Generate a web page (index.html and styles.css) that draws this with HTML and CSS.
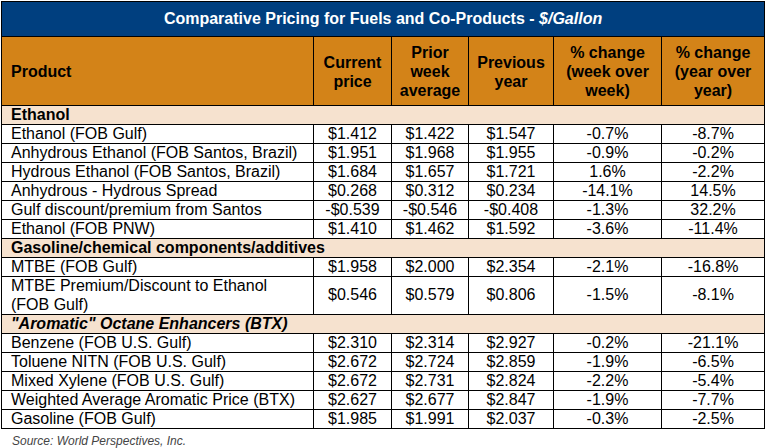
FILE: index.html
```html
<!DOCTYPE html>
<html>
<head>
<meta charset="utf-8">
<link rel="stylesheet" href="styles.css">
</head>
<body>
<div class="wrap">
<table class="pricing">
  <colgroup>
    <col class="c-prod"><col class="c-cur"><col class="c-prior"><col class="c-prev"><col class="c-wk"><col class="c-yr">
  </colgroup>
  <thead>
    <tr><th class="title" colspan="6">Comparative Pricing for Fuels and Co-Products - <i>$/Gallon</i></th></tr>
    <tr class="head">
      <th class="left">Product</th>
      <th>Current<br>price</th>
      <th>Prior<br>week<br>average</th>
      <th>Previous<br>year</th>
      <th>% change<br>(week over<br>week)</th>
      <th>% change<br>(year over<br>year)</th>
    </tr>
  </thead>
  <tbody>
    <tr class="section"><td colspan="6">Ethanol</td></tr>
    <tr><td>Ethanol (FOB Gulf)</td><td>$1.412</td><td>$1.422</td><td>$1.547</td><td>-0.7%</td><td>-8.7%</td></tr>
    <tr><td>Anhydrous Ethanol (FOB Santos, Brazil)</td><td>$1.951</td><td>$1.968</td><td>$1.955</td><td>-0.9%</td><td>-0.2%</td></tr>
    <tr><td>Hydrous Ethanol (FOB Santos, Brazil)</td><td>$1.684</td><td>$1.657</td><td>$1.721</td><td>1.6%</td><td>-2.2%</td></tr>
    <tr><td>Anhydrous - Hydrous Spread</td><td>$0.268</td><td>$0.312</td><td>$0.234</td><td>-14.1%</td><td>14.5%</td></tr>
    <tr><td>Gulf discount/premium from Santos</td><td>-$0.539</td><td>-$0.546</td><td>-$0.408</td><td>-1.3%</td><td>32.2%</td></tr>
    <tr><td>Ethanol (FOB PNW)</td><td>$1.410</td><td>$1.462</td><td>$1.592</td><td>-3.6%</td><td>-11.4%</td></tr>
    <tr class="section"><td colspan="6">Gasoline/chemical components/additives</td></tr>
    <tr><td>MTBE (FOB Gulf)</td><td>$1.958</td><td>$2.000</td><td>$2.354</td><td>-2.1%</td><td>-16.8%</td></tr>
    <tr class="double"><td>MTBE Premium/Discount to Ethanol<br>(FOB Gulf)</td><td>$0.546</td><td>$0.579</td><td>$0.806</td><td>-1.5%</td><td>-8.1%</td></tr>
    <tr class="section"><td colspan="6"><i>"Aromatic" Octane Enhancers (BTX)</i></td></tr>
    <tr><td>Benzene (FOB U.S. Gulf)</td><td>$2.310</td><td>$2.314</td><td>$2.927</td><td>-0.2%</td><td>-21.1%</td></tr>
    <tr><td>Toluene NITN (FOB U.S. Gulf)</td><td>$2.672</td><td>$2.724</td><td>$2.859</td><td>-1.9%</td><td>-6.5%</td></tr>
    <tr><td>Mixed Xylene (FOB U.S. Gulf)</td><td>$2.672</td><td>$2.731</td><td>$2.824</td><td>-2.2%</td><td>-5.4%</td></tr>
    <tr><td>Weighted Average Aromatic Price (BTX)</td><td>$2.627</td><td>$2.677</td><td>$2.847</td><td>-1.9%</td><td>-7.7%</td></tr>
    <tr><td>Gasoline (FOB Gulf)</td><td>$1.985</td><td>$1.991</td><td>$2.037</td><td>-0.3%</td><td>-2.5%</td></tr>
  </tbody>
</table>
<p class="source">Source: World Perspectives, Inc.</p>
</div>
</body>
</html>
```

FILE: styles.css
```css
html, body {
  margin: 0;
  padding: 0;
  background: #ffffff;
}
.wrap {
  padding: 1px 0 0 1px;
  font-family: "Liberation Sans", Arial, sans-serif;
}
.pricing {
  border-collapse: collapse;
  width: 763px;
  table-layout: fixed;
  border: 1px solid #000;
  font-size: 16px;
  color: #000;
}
.c-prod { width: 312px; }
.c-cur { width: 78px; }
.c-prior { width: 77px; }
.c-prev { width: 85px; }
.c-wk { width: 108px; }
.c-yr { width: 103px; }
.pricing th, .pricing td {
  border: 1px solid #000;
  padding: 0;
}
.title {
  background: #003f7f;
  color: #ffffff;
  font-weight: bold;
  line-height: 34px;
  text-align: center;
}
.head th {
  background: #d38318;
  font-weight: bold;
  line-height: 19px;
  padding: 6px 2px 5px;
  text-align: center;
  vertical-align: middle;
}
.head th.left {
  text-align: left;
  padding-left: 9px;
}
.pricing td {
  line-height: 18px;
  text-align: center;
  white-space: nowrap;
}
.pricing td:first-child {
  text-align: left;
  padding-left: 9px;
}
.double td {
  line-height: 18.5px;
}
.section td {
  background: #f6e2cf;
  font-weight: bold;
  padding-left: 10px;
}
.source {
  margin: 5px 0 0 11px;
  font-size: 12px;
  line-height: 14px;
  font-style: italic;
  color: #444444;
}
```
